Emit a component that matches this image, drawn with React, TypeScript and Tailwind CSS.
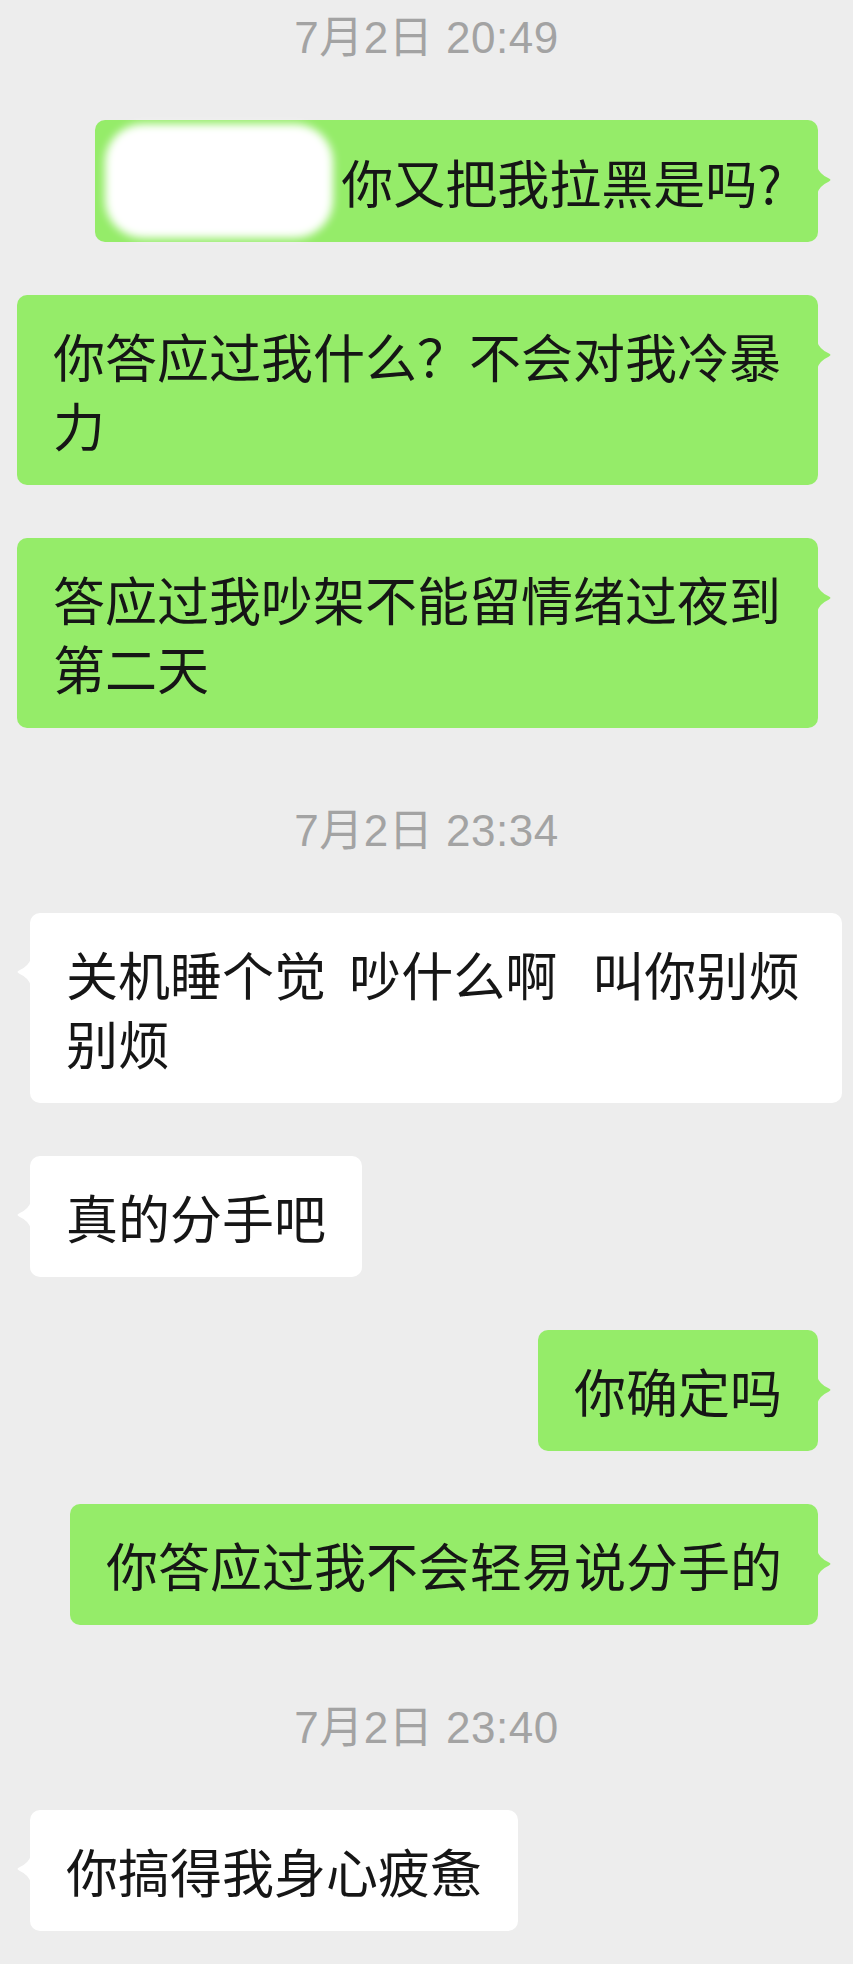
import type { ReactNode } from "react";

type Side = "me" | "them";

type Item =
  | { kind: "time"; text: string }
  | { kind: "msg"; side: Side; text: string; redacted?: boolean };

const ITEMS: Item[] = [
  { kind: "time", text: "7月2日 20:49" },
  { kind: "msg", side: "me", text: "你又把我拉黑是吗?", redacted: true },
  { kind: "msg", side: "me", text: "你答应过我什么？不会对我冷暴力" },
  { kind: "msg", side: "me", text: "答应过我吵架不能留情绪过夜到第二天" },
  { kind: "time", text: "7月2日 23:34" },
  { kind: "msg", side: "them", text: "关机睡个觉  吵什么啊   叫你别烦别烦" },
  { kind: "msg", side: "them", text: "真的分手吧" },
  { kind: "msg", side: "me", text: "你确定吗" },
  { kind: "msg", side: "me", text: "你答应过我不会轻易说分手的" },
  { kind: "time", text: "7月2日 23:40" },
  { kind: "msg", side: "them", text: "你搞得我身心疲惫" },
];

const CJK = "font-['Noto_Sans_CJK_SC','Noto_Sans_CJK_JP',sans-serif]";

// little pointed tail on the bubble edge, tip ~60px from the top
function Tail({ side }: { side: Side }) {
  const fill = side === "me" ? "#95ec69" : "#ffffff";
  return (
    <svg
      width="15"
      height="28"
      viewBox="0 0 15 28"
      className={
        side === "me"
          ? "absolute top-[46px] right-[-14px]"
          : "absolute top-[45px] left-[-14px] -scale-x-100"
      }
    >
      <path d="M0 0 Q2 8 12 12.6 Q15 14 12 15.4 Q2 20 0 28 Z" fill={fill} />
    </svg>
  );
}

function Bubble({
  side,
  redacted,
  children,
}: {
  side: Side;
  redacted?: boolean;
  children: ReactNode;
}) {
  const me = side === "me";
  return (
    <div
      className={
        me
          ? "relative mr-[35px] mt-[53px] max-w-[801px] self-end rounded-[10px] bg-[#95ec69]"
          : "relative ml-[30px] mt-[53px] max-w-[812px] self-start rounded-[10px] bg-white"
      }
    >
      <Tail side={side} />
      {redacted ? (
        <div className="flex items-center py-[26px] pl-[10px] pr-[36px]">
          {/* blurred-out name */}
          <div className="-my-[22px] h-[114px] w-[228px] shrink-0 rounded-[38px] bg-white blur-[4px]" />
          <p
            className={`ml-[8px] whitespace-pre-wrap text-[52px] leading-[69px] text-[#161616] ${CJK}`}
          >
            {children}
          </p>
        </div>
      ) : (
        <p
          className={`whitespace-pre-wrap px-[36px] py-[26px] text-[52px] leading-[69px] text-[#161616] ${CJK}`}
        >
          {children}
        </p>
      )}
    </div>
  );
}

function TimeStamp({ text, first }: { text: string; first: boolean }) {
  return (
    <div
      className={`flex h-[50px] items-center justify-center ${first ? "mt-[13px]" : "mt-[78px]"}`}
    >
      <span className="font-['Liberation_Sans','Noto_Sans_CJK_SC',sans-serif] text-[44px] leading-[50px] tracking-[0.5px] text-[#a3a3a3]">
        {text}
      </span>
    </div>
  );
}

export default function App() {
  return (
    <div className="min-h-[1964px] w-[853px] bg-[#ededed] pb-[35px]">
      <div className="flex flex-col">
        {ITEMS.map((it, i) => {
          if (it.kind === "time") {
            return <TimeStamp key={i} text={it.text} first={i === 0} />;
          }
          const afterTime = i > 0 && ITEMS[i - 1]!.kind === "time";
          return (
            <div
              key={i}
              className={
                afterTime
                  ? "flex flex-col [&>div]:mt-[57px]"
                  : "flex flex-col"
              }
            >
              <Bubble side={it.side} redacted={it.redacted}>
                {it.text}
              </Bubble>
            </div>
          );
        })}
      </div>
    </div>
  );
}
